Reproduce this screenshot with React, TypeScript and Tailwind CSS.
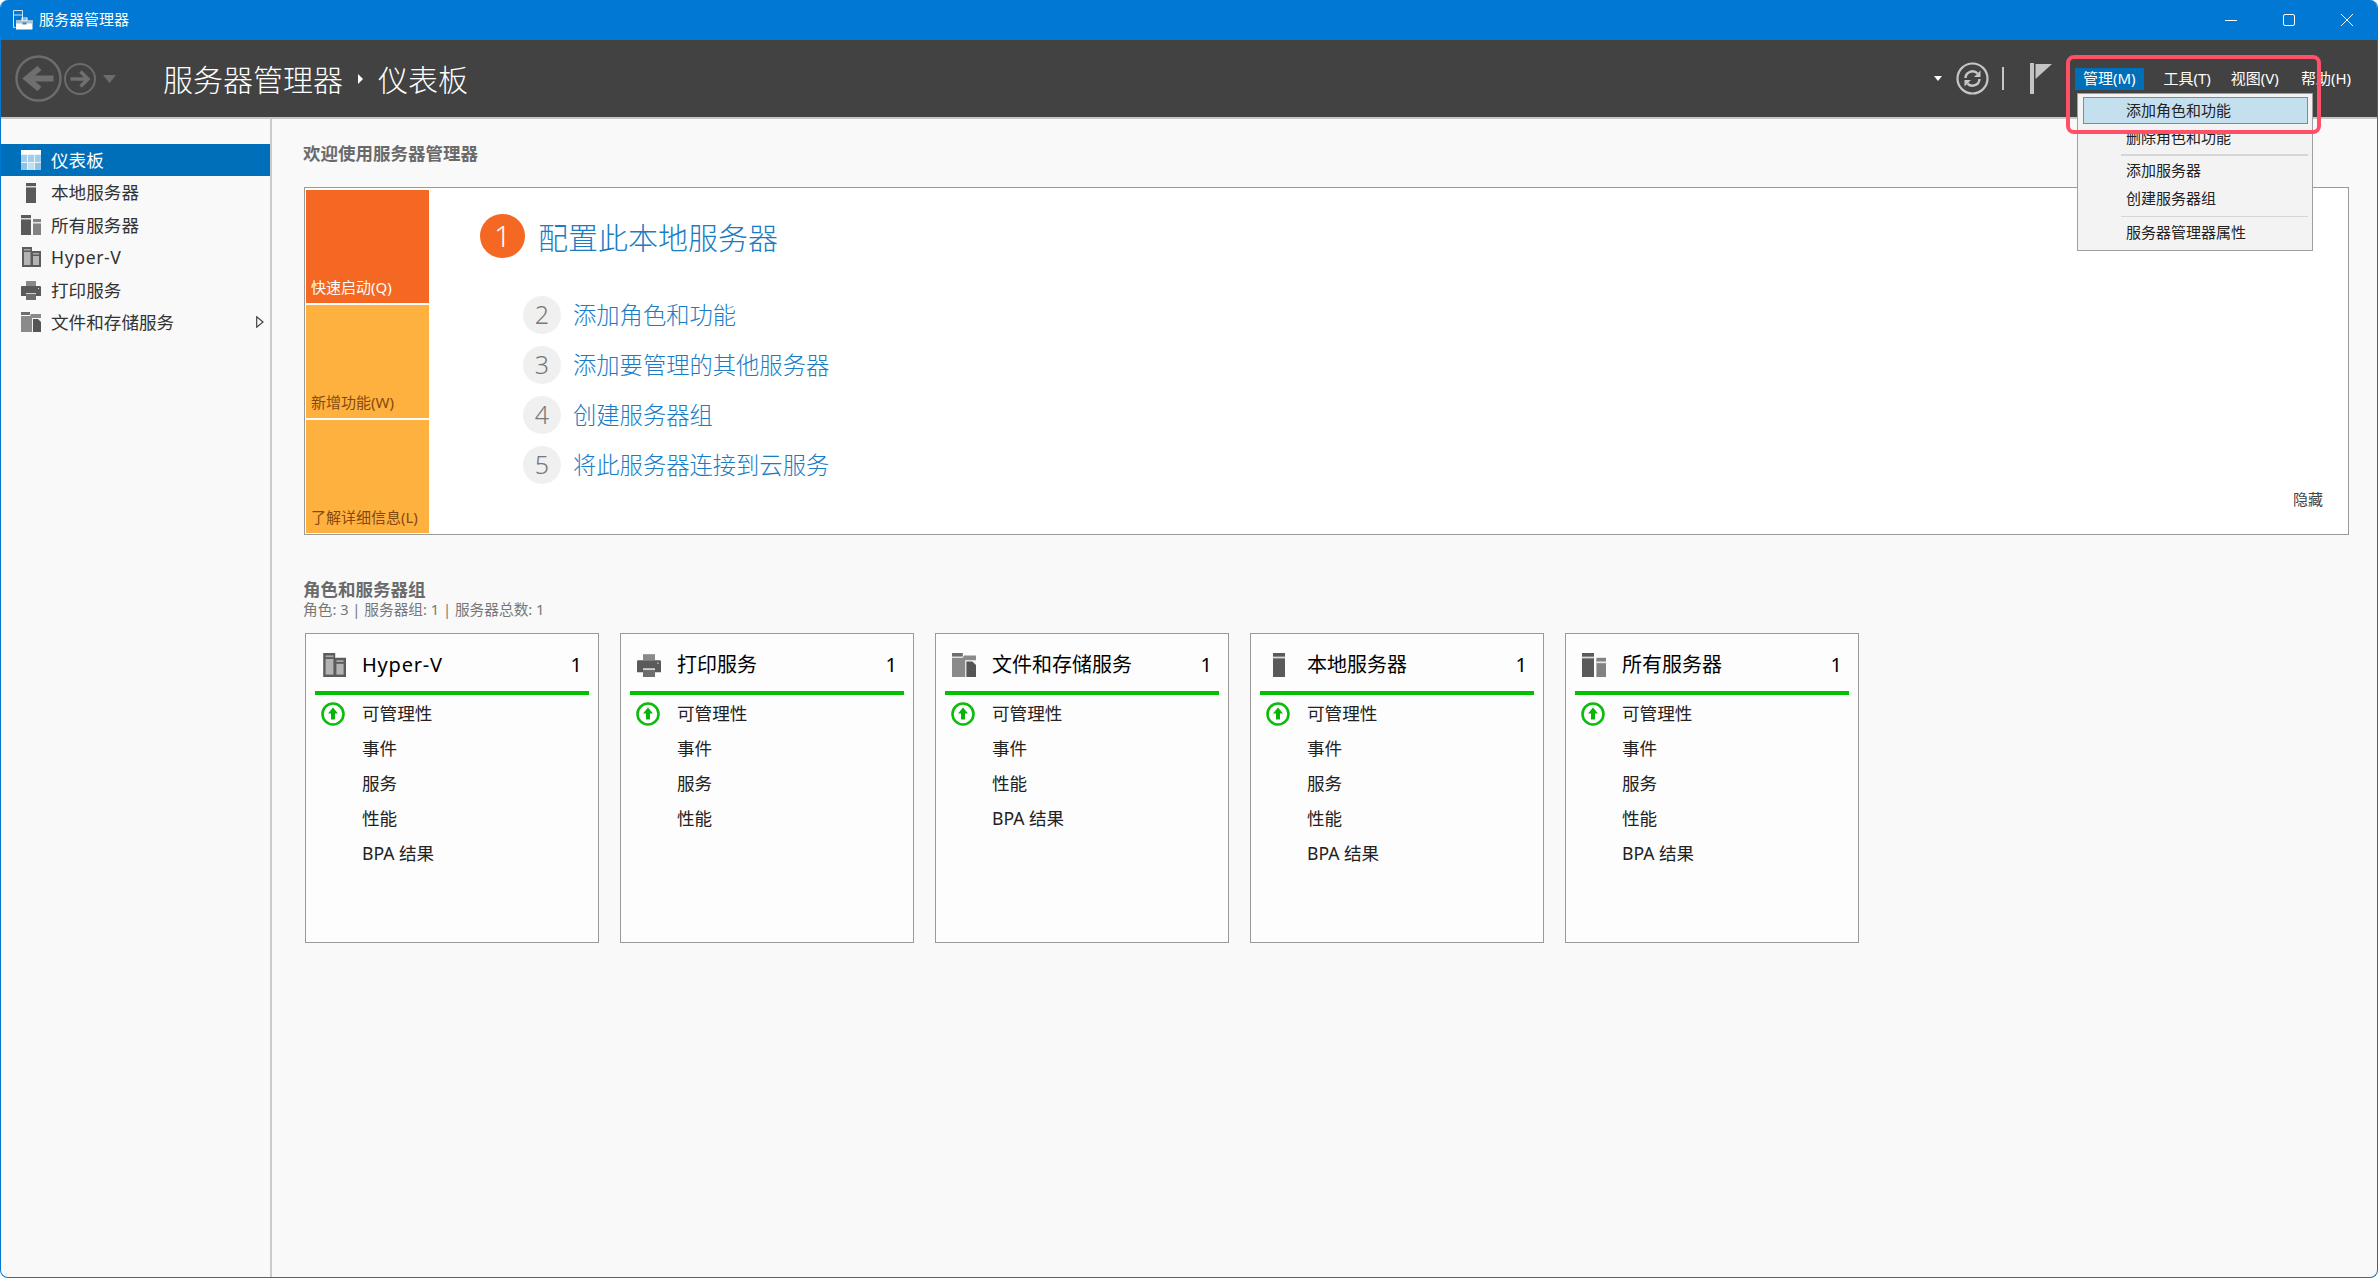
import type { ReactNode } from 'react'

type IconProps = { size?: number }

function DashboardIcon({ size = 20 }: IconProps) {
  return (
    <svg width={size} height={size} viewBox="0 0 20 20">
      <rect x="0" y="0" width="20" height="4" fill="#ffffff" />
      <rect x="0" y="4" width="20" height="16" fill="#e8f3fa" />
      <rect x="0" y="5" width="6" height="7" fill="#9fcdea" />
      <rect x="7" y="5" width="6" height="7" fill="#9fcdea" />
      <rect x="14" y="5" width="6" height="7" fill="#9fcdea" />
      <rect x="0" y="13" width="6" height="7" fill="#8cc3e6" />
      <rect x="7" y="13" width="6" height="7" fill="#bfdff2" />
      <rect x="14" y="13" width="6" height="7" fill="#8cc3e6" />
    </svg>
  )
}

function ServerIcon({ size = 20 }: IconProps) {
  return (
    <svg width={size} height={size} viewBox="0 0 20 20">
      <rect x="5" y="0" width="10" height="20" fill="#5a5a5a" />
      <rect x="5" y="3" width="10" height="1.5" fill="#d8d8d8" />
    </svg>
  )
}

function AllServersIcon({ size = 20 }: IconProps) {
  return (
    <svg width={size} height={size} viewBox="0 0 20 20">
      <rect x="0" y="0" width="10" height="20" fill="#5a5a5a" />
      <rect x="0" y="3" width="10" height="1.5" fill="#d8d8d8" />
      <rect x="12" y="4" width="8" height="16" fill="#828282" />
      <rect x="12" y="7" width="8" height="1.5" fill="#e4e4e4" />
    </svg>
  )
}

function HyperVIcon({ size = 20 }: IconProps) {
  return (
    <svg width={size} height={size} viewBox="0 0 20 20">
      <path d="M1 0H11V4H20V20H1Z" fill="#5c5c5c" />
      <rect x="3" y="2" width="6.5" height="1.5" fill="#a8a8a8" />
      <rect x="3" y="5" width="6.5" height="13" fill="#b4b4b4" />
      <rect x="12" y="6" width="6" height="1.5" fill="#a8a8a8" />
      <rect x="12" y="9" width="6" height="9" fill="#b4b4b4" />
    </svg>
  )
}

function PrinterIcon({ size = 20 }: IconProps) {
  return (
    <svg width={size} height={size} viewBox="0 0 20 20">
      <rect x="5" y="1" width="10" height="5" fill="#8a8a8a" />
      <path d="M1 6H19a1 1 0 0 1 1 1V16H15V13H5V16H0V7a1 1 0 0 1 1-1Z" fill="#5a5a5a" />
      <rect x="5" y="14" width="10" height="6" fill="#6e6e6e" />
      <rect x="5" y="13" width="10" height="1" fill="#d0d0d0" />
      <rect x="17" y="8" width="1" height="1" fill="#e8e8e8" />
    </svg>
  )
}

function FilesIcon({ size = 20 }: IconProps) {
  return (
    <svg width={size} height={size} viewBox="0 0 20 20">
      <rect x="0" y="0" width="9" height="3" fill="#6e6e6e" />
      <path d="M0 4H9L10 2H20V20H0Z" fill="#8a8a8a" />
      <rect x="11" y="6" width="9" height="15" fill="#f4f4f4" />
      <path d="M12 7H17L20 10V20H12Z" fill="#555555" />
    </svg>
  )
}

function AppIcon() {
  return (
    <svg width="21" height="20" viewBox="0 0 21 20">
      <path d="M1.5 .5H10.5V10M3.5 17.5H1.5V.5M1.5 5H10.5" fill="none" stroke="#cfe6f7" strokeWidth="1" />
      <rect x="4" y="10" width="16.5" height="9.5" fill="#ffffff" />
      <rect x="4" y="10" width="16.5" height="3.5" fill="#a9c3d6" />
      <rect x="10" y="8" width="5" height="2" fill="none" stroke="#ffffff" />
      <rect x="10.5" y="12.5" width="4" height="2" fill="#5a7f9b" />
    </svg>
  )
}

function BackIcon() {
  return (
    <svg width="47" height="47" viewBox="0 0 47 47">
      <circle cx="23.5" cy="23.5" r="22" fill="none" stroke="#6c6c6c" strokeWidth="2.5" />
      <path d="M12 23.5H38.5M24.5 13L12 23.5L24.5 34" fill="none" stroke="#6f6f6f" strokeWidth="6" />
    </svg>
  )
}

function ForwardIcon() {
  return (
    <svg width="32" height="32" viewBox="0 0 32 32">
      <circle cx="16" cy="16" r="15" fill="none" stroke="#6c6c6c" strokeWidth="2" />
      <path d="M6.5 16H23M16.5 8.5L24 16L16.5 23.5" fill="none" stroke="#6f6f6f" strokeWidth="3.5" />
    </svg>
  )
}

function RefreshIcon() {
  return (
    <svg width="33" height="33" viewBox="0 0 33 33">
      <circle cx="16.5" cy="16.5" r="15" fill="none" stroke="#c6c6c6" strokeWidth="2.2" />
      <path d="M9.5 16a7 7 0 0 1 12-4.6" fill="none" stroke="#c6c6c6" strokeWidth="2.4" />
      <path d="M24.5 8.5V15H18Z" fill="#c6c6c6" />
      <path d="M23.5 17a7 7 0 0 1-12 4.6" fill="none" stroke="#c6c6c6" strokeWidth="2.4" />
      <path d="M8.5 24.5V18H15Z" fill="#c6c6c6" />
    </svg>
  )
}

function FlagIcon() {
  return (
    <svg width="22" height="31" viewBox="0 0 22 31">
      <rect x="0" y="0" width="4" height="31" fill="#c4c4c4" />
      <path d="M5.5 1H22L5.5 16Z" fill="#c4c4c4" />
    </svg>
  )
}

function StatusIcon() {
  return (
    <svg width="24" height="24" viewBox="0 0 24 24">
      <circle cx="12" cy="12" r="10.5" fill="#ffffff" stroke="#0cbc0c" strokeWidth="2.6" />
      <path d="M12 5.5L17 11.5H14V17.5H10V11.5H7Z" fill="#07b507" />
    </svg>
  )
}

const NAV_ITEMS: { label: string; icon: (p: IconProps) => ReactNode; active?: boolean; arrow?: boolean }[] = [
  { label: '仪表板', icon: DashboardIcon, active: true },
  { label: '本地服务器', icon: ServerIcon },
  { label: '所有服务器', icon: AllServersIcon },
  { label: 'Hyper-V', icon: HyperVIcon },
  { label: '打印服务', icon: PrinterIcon },
  { label: '文件和存储服务', icon: FilesIcon, arrow: true },
]

const STEPS = [
  { n: '2', label: '添加角色和功能' },
  { n: '3', label: '添加要管理的其他服务器' },
  { n: '4', label: '创建服务器组' },
  { n: '5', label: '将此服务器连接到云服务' },
]

const FULL_ROWS = ['事件', '服务', '性能', 'BPA 结果']

const CARDS = [
  { title: 'Hyper-V', icon: HyperVIcon, rows: FULL_ROWS },
  { title: '打印服务', icon: PrinterIcon, rows: ['事件', '服务', '性能'] },
  { title: '文件和存储服务', icon: FilesIcon, rows: ['事件', '性能', 'BPA 结果'] },
  { title: '本地服务器', icon: ServerIcon, rows: FULL_ROWS },
  { title: '所有服务器', icon: AllServersIcon, rows: FULL_ROWS },
]

function Sidebar() {
  return (
    <aside className="w-[271px] shrink-0 border-r-2 border-[#cbcbcb] pt-[25px]">
      {NAV_ITEMS.map((item) => {
        const Icon = item.icon
        return (
          <div
            key={item.label}
            className={`flex h-[32.4px] items-center pl-[20px] pr-[6px] text-[17.6px] ${
              item.active ? 'bg-[#006fb9] text-white' : 'text-[#333333]'
            }`}
          >
            <Icon />
            <span className={item.label === 'Hyper-V' ? 'ml-[10px] tracking-[0.6px]' : 'ml-[10px]'}>{item.label}</span>
            {item.arrow && (
              <svg className="ml-auto" width="8" height="12" viewBox="0 0 8 12">
                <path d="M.7 .8L7 6L.7 11.2Z" fill="none" stroke="#444444" strokeWidth="1.2" />
              </svg>
            )}
          </div>
        )
      })}
    </aside>
  )
}

function QuickStart() {
  return (
    <div className="mt-[21px] flex h-[348px] border border-[#9a9a9a] bg-white">
      <div className="ml-px mt-[2px] flex w-[123px] shrink-0 flex-col gap-[2px]">
        <div className="flex h-[113px] items-end bg-[#f46823] pb-[6px] pl-[5px] text-[15px] leading-[20px] text-white">
          快速启动(Q)
        </div>
        <div className="flex h-[113px] items-end bg-[#ffb13f] pb-[6px] pl-[5px] text-[15px] leading-[20px] text-[#85490f]">
          新增功能(W)
        </div>
        <div className="flex h-[113px] items-end bg-[#ffb13f] pb-[6px] pl-[5px] text-[15px] leading-[20px] text-[#85490f]">
          了解详细信息(L)
        </div>
      </div>
      <div className="flex-1 pl-[51px] pt-[26px]">
        <div className="flex items-center">
          <div className="flex h-[44px] w-[45px] items-center justify-center rounded-full bg-[#f46823] text-[29px] font-light text-white">
            1
          </div>
          <span className="ml-[13px] pt-[3px] text-[30px] font-light leading-[41px] text-[#1a7cc4]">
            配置此本地服务器
          </span>
        </div>
        <div className="ml-[43px] mt-[38px] flex flex-col gap-[12px]">
          {STEPS.map((step) => (
            <div key={step.n} className="flex items-center">
              <div className="flex h-[38px] w-[38px] items-center justify-center rounded-full bg-[#f0f0f0] text-[25px] font-light text-[#777777]">
                {step.n}
              </div>
              <span className="ml-[12px] pt-px text-[23.3px] font-light leading-[33px] text-[#1a7cc4]">
                {step.label}
              </span>
            </div>
          ))}
        </div>
      </div>
      <span className="mb-[25px] mr-[25px] self-end text-[15px] leading-[20px] text-[#444444]">隐藏</span>
    </div>
  )
}

function RoleCard({ card }: { card: (typeof CARDS)[number] }) {
  const Icon = card.icon
  return (
    <div className="h-[310px] w-[294px] border border-[#9a9a9a] bg-[#fdfdfd] px-[9px]">
      <div className="flex h-[57px] items-center pl-[7px] pr-[7px] pt-[5px] text-[20px] text-black">
        <Icon size={24} />
        <span className={card.title === 'Hyper-V' ? 'ml-[16px] tracking-[0.8px]' : 'ml-[16px]'}>{card.title}</span>
        <span className="ml-auto">1</span>
      </div>
      <div className="h-[4px] bg-[#00c000]" />
      <div className="mt-px pl-[6px] text-[17.6px] text-[#222222]">
        <div className="flex h-[35px] items-center">
          <StatusIcon />
          <span className="ml-[17px]">可管理性</span>
        </div>
        {card.rows.map((row) => (
          <div key={row} className="flex h-[35px] items-center pl-[41px]">
            {row}
          </div>
        ))}
      </div>
    </div>
  )
}

function ManageMenu() {
  return (
    <div className="absolute left-[2076px] top-[93px] h-[158px] w-[236px] border border-[#a0a0a0] bg-[#f3f3f3] py-[3px] pl-[4px] pr-[4px] text-[15px] text-[#222222]">
      <div className="relative">
        <div className="ml-px flex h-[27px] items-center border border-[#3a9fdc] bg-[#c4e0ef] pl-[42px]">
          添加角色和功能
        </div>
        <div className="flex h-[30px] items-center pb-[3px] pl-[44px]">删除角色和功能</div>
        <div className="ml-[39px] h-[2px] bg-[#d6d6d6]" />
        <div className="flex h-[32px] items-center pb-[3px] pl-[44px]">添加服务器</div>
        <div className="flex h-[24px] items-center pb-[3px] pl-[44px]">创建服务器组</div>
        <div className="ml-[39px] mt-[4px] h-px bg-[#d6d6d6]" />
        <div className="flex h-[34px] items-center pb-[3px] pl-[44px]">服务器管理器属性</div>
      </div>
    </div>
  )
}

export default function App() {
  return (
    <div className="relative h-[1278px] w-[2378px] overflow-hidden rounded-[8px] border-x border-b border-[#0078d4] bg-[#f9f9f9] font-['Noto_Sans','Noto_Sans_CJK_SC',sans-serif]">
      <header className="flex h-[40px] items-center bg-[#0078d4] pl-[11px] text-white">
        <AppIcon />
        <span className="ml-[6px] -mt-[2px] text-[15px]">服务器管理器</span>
        <div className="ml-auto flex pr-px">
          <div className="flex h-[40px] w-[58px] items-center justify-center">
            <svg width="12" height="1" viewBox="0 0 12 1">
              <rect width="12" height="1" fill="#ffffff" />
            </svg>
          </div>
          <div className="flex h-[40px] w-[58px] items-center justify-center">
            <svg width="12" height="12" viewBox="0 0 12 12">
              <rect x=".5" y=".5" width="11" height="11" rx="1.5" fill="none" stroke="#ffffff" />
            </svg>
          </div>
          <div className="flex h-[40px] w-[58px] items-center justify-center">
            <svg width="12" height="12" viewBox="0 0 12 12">
              <path d="M0 0L12 12M12 0L0 12" stroke="#ffffff" strokeWidth="1" />
            </svg>
          </div>
        </div>
      </header>

      <div className="flex h-[79px] items-center border-b-2 border-[#c8c8c8] bg-[#424242] pl-[14px]">
        <BackIcon />
        <div className="ml-[2px]">
          <ForwardIcon />
        </div>
        <svg className="ml-[7px]" width="13" height="8" viewBox="0 0 13 8">
          <path d="M0 0H13L6.5 8Z" fill="#6c6c6c" />
        </svg>
        <span className="ml-[47px] pt-px text-[30px] font-light text-white">服务器管理器</span>
        <svg className="ml-[15px]" width="5" height="10" viewBox="0 0 5 10">
          <path d="M0 0L5 5L0 10Z" fill="#ffffff" />
        </svg>
        <span className="ml-[15px] pt-px text-[30px] font-light text-white">仪表板</span>

        <div className="ml-auto flex items-center pr-[18px] text-[15px] text-white">
          <svg width="8" height="5" viewBox="0 0 8 5">
            <path d="M0 0H8L4 5Z" fill="#ffffff" />
          </svg>
          <div className="ml-[14px]">
            <RefreshIcon />
          </div>
          <div className="ml-[13px] h-[23px] w-[2px] bg-[#c6c6c6]" />
          <div className="ml-[26px]">
            <FlagIcon />
          </div>
          <div className="ml-[23px] flex h-[22px] items-center bg-[#006fb9] px-[8px]">管理(M)</div>
          <div className="ml-[12px] px-[8px]">工具(T)</div>
          <div className="ml-[4px] px-[8px]">视图(V)</div>
          <div className="ml-[6px] px-[8px]">帮助(H)</div>
        </div>
      </div>

      <div className="flex h-[1158px]">
        <Sidebar />
        <main className="min-w-0 flex-1 pl-[32px] pr-[28px] pt-[21px]">
          <h2 className="-ml-px text-[17.5px] font-bold leading-[26px] text-[#6a6a6a]">欢迎使用服务器管理器</h2>
          <QuickStart />
          <h2 className="-ml-px mt-[43px] text-[17.5px] font-bold leading-[22px] text-[#6a6a6a]">角色和服务器组</h2>
          <p className="-ml-px text-[14.7px] leading-[18px] text-[#777777]">角色: 3 | 服务器组: 1 | 服务器总数: 1</p>
          <div className="ml-px mt-[15px] flex gap-[21px]">
            {CARDS.map((card) => (
              <RoleCard key={card.title} card={card} />
            ))}
          </div>
        </main>
      </div>

      <ManageMenu />
      <div className="pointer-events-none absolute left-[2065px] top-[55px] h-[79px] w-[255px] rounded-[8px] border-[4px] border-[#ff5067]" />
    </div>
  )
}
